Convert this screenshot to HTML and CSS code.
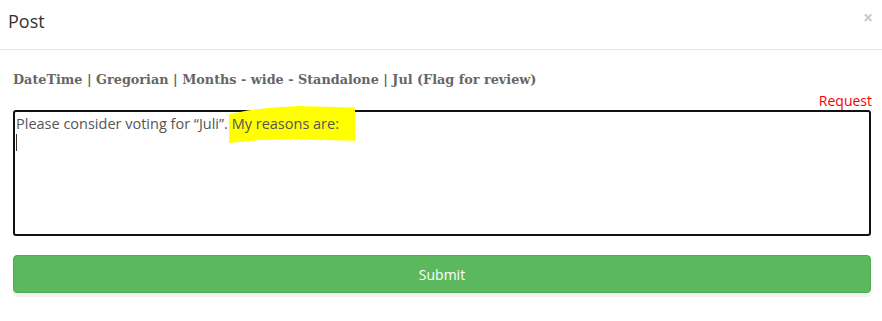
FILE: index.html
```html
<!DOCTYPE html>
<html>
<head>
<meta charset="utf-8">
<link rel="stylesheet" href="styles.css">
</head>
<body>
<div class="modal">
  <div class="modal-header">
    <h4 class="modal-title">Post</h4>
    <span class="close">×</span>
  </div>
  <div class="modal-body">
    <div class="item-title">DateTime | Gregorian | Months - wide - Standalone | Jul (Flag for review)</div>
    <div class="request-row"><span class="request">Request</span></div>
    <div class="textarea">
      <span class="text">Please consider voting for “Juli”. <span class="hl">My reasons are:</span></span>
      <span class="caret"></span>
    </div>
    <button class="submit">Submit</button>
  </div>
</div>
</body>
</html>
```
FILE: styles.css
```css
* { box-sizing: border-box; }
html, body { margin: 0; padding: 0; background: #fff; }
body { font-family: "Open Sans", sans-serif; color: #333; }
.modal { width: 882px; height: 321px; }
.modal-header {
  height: 50px;
  border-bottom: 1px solid #e5e5e5;
  display: flex;
  justify-content: space-between;
  align-items: flex-start;
  padding: 8px 9px 0 8px;
}
.modal-title { margin: 0; font-size: 18px; font-weight: 400; line-height: 26px; color: #333; }
.close { font-size: 17px; color: #c8c8c8; line-height: 20px; margin-top: 0; font-weight: 700; }
.modal-body { padding: 20px 11px 0 13px; }
.item-title {
  font-family: "DejaVu Serif", serif;
  font-weight: 700;
  font-size: 12.8px;
  color: #666;
  line-height: 20px;
}
.request-row { display: flex; justify-content: flex-end; height: 20px; }
.request { color: #f00; font-size: 14px; line-height: 21px; margin-right: -1px; }
.textarea {
  position: relative;
  height: 126px;
  border: 2px solid #111;
  border-radius: 3px;
  padding: 1px 1px;
  font-size: 14.5px;
  color: #555;
  line-height: 21px;
}
.text { position: relative; }
.hl { position: relative; z-index: 1; }
.hl::before {
  content: "";
  position: absolute;
  left: -3px; right: -16px; top: -8px; bottom: -10px;
  background: #ffff00;
  clip-path: polygon(0% 22%, 15% 12%, 35% 4%, 55% 0%, 75% 2%, 100% 4%, 100% 94%, 75% 92%, 50% 90%, 25% 92%, 0% 100%);
  z-index: -1;
}
.caret {
  display: block;
  width: 1px;
  height: 17px;
  background: #333;
  margin-top: 0;
}
.submit {
  display: block;
  width: 100%;
  height: 38px;
  margin-top: 19px;
  background: #5cb85c;
  border: 1px solid #4cae4c;
  border-radius: 4px;
  color: #fff;
  font-family: "Open Sans", sans-serif;
  font-size: 14px;
  box-shadow: 0 4px 0 #f2f2f2;
}
```
